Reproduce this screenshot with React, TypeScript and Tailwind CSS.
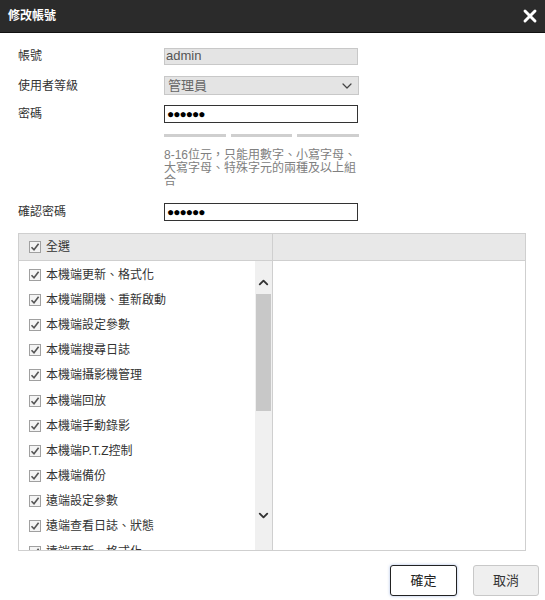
import { ChevronDown, ChevronUp, X } from 'lucide-react'

const items = [
  '本機端更新、格式化',
  '本機端關機、重新啟動',
  '本機端設定參數',
  '本機端搜尋日誌',
  '本機端攝影機管理',
  '本機端回放',
  '本機端手動錄影',
  '本機端P.T.Z控制',
  '本機端備份',
  '遠端設定參數',
  '遠端查看日誌、狀態',
  '遠端更新、格式化',
]

const font = { fontFamily: '"Liberation Sans", "Noto Sans CJK TC", sans-serif' }

function Check() {
  return (
    <span className="flex h-[12px] w-[12px] shrink-0 items-center justify-center border border-[#a0a0a0] bg-[#f4f4f4]">
      <svg width="10" height="10" viewBox="0 0 10 10">
        <path d="M1.5 5.2 L4 7.8 L8.6 1.8" fill="none" stroke="#555" strokeWidth="1.6" />
      </svg>
    </span>
  )
}

function Row({ label, children }: { label: string; children: React.ReactNode }) {
  return (
    <div className="flex items-center">
      <div className="w-[146px] text-[12px] text-[#333]">{label}</div>
      {children}
    </div>
  )
}

export default function App() {
  return (
    <div className="h-[600px] w-[545px] bg-white text-[#333]" style={font}>
      <div className="flex h-[33px] items-center justify-between border-b border-[#111] bg-[#2b2b2b] pl-[8px] pr-[5px]">
        <span className="text-[12px] font-bold text-white">修改帳號</span>
        <X size={20} strokeWidth={3.5} className="text-white" />
      </div>

      <div className="flex flex-col px-[18px] pt-[14px]">
        <Row label="帳號">
          <div className="flex h-[17px] w-[194px] items-center border border-[#c8c8c8] bg-[#e4e4e4] px-[1px] text-[13px] text-[#555]">
            admin
          </div>
        </Row>
        <div className="h-[11px]" />
        <Row label="使用者等級">
          <div className="flex h-[19px] w-[195px] items-center justify-between border border-[#c8c8c8] bg-[#e4e4e4] pl-[3px] pr-[3px] text-[13px] text-[#666]">
            管理員
            <ChevronDown size={16} strokeWidth={1.8} className="text-[#444]" />
          </div>
        </Row>
        <div className="h-[10px]" />
        <Row label="密碼">
          <div className="flex h-[18px] w-[194px] items-center border border-[#333] bg-white pl-[2px] text-[12px] tracking-[-1px] text-black">
            ●●●●●●
          </div>
        </Row>
        <div className="ml-[146px] mt-[11px] flex w-[195px] gap-[5px]">
          <div className="h-[3px] flex-1 bg-[#cfcfcf]" />
          <div className="h-[3px] flex-1 bg-[#cfcfcf]" />
          <div className="h-[3px] flex-1 bg-[#cfcfcf]" />
        </div>
        <div className="ml-[146px] mt-[12px] w-[200px] text-[12px] leading-[13px] text-[#808080]">
          8-16位元，只能用數字、小寫字母、大寫字母、特殊字元的兩種及以上組合
        </div>
        <div className="h-[15px]" />
        <Row label="確認密碼">
          <div className="flex h-[18px] w-[194px] items-center border border-[#333] bg-white pl-[2px] text-[12px] tracking-[-1px] text-black">
            ●●●●●●
          </div>
        </Row>

        <div className="mt-[12px] flex h-[318px] w-[508px] border border-[#cfcfcf]">
          <div className="flex w-[254px] flex-col border-r border-[#cfcfcf]">
            <div className="flex h-[27px] shrink-0 items-center gap-[5px] border-b border-[#cfcfcf] bg-[#e8e8e8] pl-[10px] text-[12px]">
              <Check />
              全選
            </div>
            <div className="flex min-h-0 flex-1">
              <div className="flex-1 overflow-hidden pt-[1px]">
                {items.map((t) => (
                  <div key={t} className="flex h-[25.2px] items-center gap-[5px] pl-[10px] text-[12px]">
                    <Check />
                    {t}
                  </div>
                ))}
              </div>
              <div className="flex w-[17px] flex-col bg-[#f0f0f0]">
                <div className="flex h-[33px] items-end justify-center pb-[4px]">
                  <ChevronUp size={15} strokeWidth={3} className="text-[#333]" />
                </div>
                <div className="mx-[1px] h-[117px] bg-[#c8c8c8]" />
                <div className="flex-1" />
                <div className="flex h-[30px] items-start justify-center">
                  <ChevronDown size={15} strokeWidth={3} className="text-[#333]" />
                </div>
                <div className="h-[12px]" />
              </div>
            </div>
          </div>
          <div className="flex flex-1 flex-col">
            <div className="h-[27px] border-b border-[#cfcfcf] bg-[#e8e8e8]" />
          </div>
        </div>
      </div>

      <div className="mt-[14px] flex justify-end gap-[16px] pr-[6px]">
        <button className="h-[31px] w-[67px] rounded-[3px] border border-[#222] bg-white text-[13px] text-[#222] shadow-[0_0_3px_rgba(80,120,200,0.5)]">
          確定
        </button>
        <button className="h-[31px] w-[66px] rounded-[3px] border border-[#c8c8c8] bg-[#efefef] text-[13px] text-[#333]">
          取消
        </button>
      </div>
    </div>
  )
}
